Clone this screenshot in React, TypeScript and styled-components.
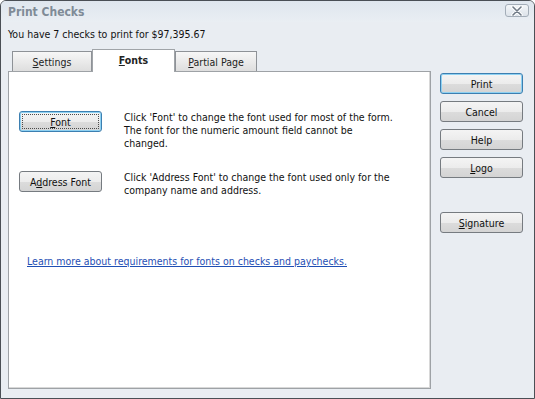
import React from "react";
import styled, { createGlobalStyle, css } from "styled-components";

const Global = createGlobalStyle`
  html, body { margin: 0; padding: 0; background: #ffffff; }
  body { font-family: "DejaVu Sans Condensed", "DejaVu Sans", sans-serif; }
  * { box-sizing: border-box; }
`;

const Window = styled.div`
  width: 535px;
  height: 399px;
  border: 1px solid #4a4f55;
  border-radius: 6px 6px 0 0;
  background: #e9edf2;
  display: flex;
  flex-direction: column;
  overflow: hidden;
  font-family: "DejaVu Sans Condensed", "DejaVu Sans", sans-serif;
  font-size: 10.5px;
  color: #111;
`;

const TitleBar = styled.div`
  height: 21px;
  display: flex;
  align-items: center;
  justify-content: space-between;
  padding: 0 5px 0 7px;
  background: linear-gradient(#dfe6ee, #e9eef3);
`;

const Title = styled.span`
  font-family: "DejaVu Sans Condensed", "DejaVu Sans", sans-serif;
  font-weight: bold;
  font-size: 12px;
  color: #7f8b97;
`;

const CloseBtn = styled.div`
  width: 24px;
  height: 13px;
  border: 1px solid #a3adb8;
  border-radius: 3px;
  background: linear-gradient(#f3f6f9, #dde3ea);
  display: flex;
  align-items: center;
  justify-content: center;
  margin-top: -2px;
`;

const Summary = styled.div`
  margin-top: 5px;
  padding-left: 7px;
  line-height: 14px;
`;

const Main = styled.div`
  display: flex;
  padding-left: 7px;
  margin-top: 8px;
`;

const LeftCol = styled.div`
  width: 423px;
  display: flex;
  flex-direction: column;
`;

const TabStrip = styled.div`
  height: 22px;
  display: flex;
  align-items: flex-end;
  padding-left: 4px;
  position: relative;
  z-index: 1;
`;

const Tab = styled.div<{ $active?: boolean; $w: number }>`
  width: ${(p) => p.$w}px;
  height: 20px;
  display: flex;
  align-items: center;
  justify-content: center;
  border: 1px solid #8e9297;
  border-bottom: none;
  background: linear-gradient(#f7f7f7, #dedede);
  color: #222;
  ${(p) =>
    p.$active &&
    css`
      height: 23px;
      margin-bottom: -1px;
      background: #ffffff;
      font-weight: bold;
      border-color: #a0a4a8;
      padding-bottom: 2px;
    `}
`;

const Panel = styled.div`
  height: 318px;
  background: #ffffff;
  border: 1px solid #9ea2a6;
  box-shadow: inset -1px -1px 0 #d8d8d8;
  padding: 0 10px;
  display: flex;
  flex-direction: column;
`;

const Row = styled.div<{ $mt: number }>`
  display: flex;
  align-items: flex-start;
  gap: 22px;
  margin-top: ${(p) => p.$mt}px;
`;

const Desc = styled.p`
  margin: 0;
  line-height: 13px;
  white-space: nowrap;
`;

const Button = styled.div<{ $focus?: boolean; $default?: boolean }>`
  width: 83px;
  height: 21px;
  flex: none;
  display: flex;
  align-items: center;
  justify-content: center;
  border: 1px solid #767b80;
  border-radius: 3px;
  background: linear-gradient(#f4f4f4 0%, #ececec 50%, #dcdcdc 51%, #d4d4d4 100%);
  color: #111;
  position: relative;
  ${(p) =>
    (p.$focus || p.$default) &&
    css`
      border-color: #3c7fb1;
      box-shadow: inset 0 0 0 1px #8ed1f2;
    `}
  ${(p) =>
    p.$focus &&
    css`
      &::after {
        content: "";
        position: absolute;
        inset: 2px;
        border: 1px dotted #4b4b4b;
        border-radius: 1px;
      }
    `}
`;

const Link = styled.a`
  margin-top: 58px;
  margin-left: 8px;
  line-height: 13px;
  color: #1f4fb4;
  text-decoration: underline;
  cursor: pointer;
`;

const RightCol = styled.div`
  margin-left: 9px;
  padding-top: 24px;
  display: flex;
  flex-direction: column;
  gap: 7px;
`;

const Spacer = styled.div`
  height: 20px;
`;

export default function App() {
  return (
    <>
      <Global />
      <Window>
        <TitleBar>
          <Title>Print Checks</Title>
          <CloseBtn>
            <svg width="12" height="10" viewBox="0 0 12 10">
              <path d="M2 1 L10 9 M10 1 L2 9" stroke="#ffffff" strokeWidth="3.4" strokeLinecap="round" />
              <path d="M2 1 L10 9 M10 1 L2 9" stroke="#6f7a86" strokeWidth="1.6" strokeLinecap="round" />
            </svg>
          </CloseBtn>
        </TitleBar>
        <Summary>You have 7 checks to print for $97,395.67</Summary>
        <Main>
          <LeftCol>
            <TabStrip>
              <Tab $w={80}>
                <span>
                  <u>S</u>ettings
                </span>
              </Tab>
              <Tab $w={83} $active>
                <span>
                  <u>F</u>onts
                </span>
              </Tab>
              <Tab $w={82}>
                <span>
                  <u>P</u>artial Page
                </span>
              </Tab>
            </TabStrip>
            <Panel>
              <Row $mt={39}>
                <Button $focus>
                  <span>
                    <u>F</u>ont
                  </span>
                </Button>
                <Desc>
                  Click 'Font' to change the font used for most of the form.
                  <br />
                  The font for the numeric amount field cannot be
                  <br />
                  changed.
                </Desc>
              </Row>
              <Row $mt={21}>
                <Button>
                  <span>
                    A<u>d</u>dress Font
                  </span>
                </Button>
                <Desc>
                  Click 'Address Font' to change the font used only for the
                  <br />
                  company name and address.
                </Desc>
              </Row>
              <Link>Learn more about requirements for fonts on checks and paychecks.</Link>
            </Panel>
          </LeftCol>
          <RightCol>
            <Button $default>Print</Button>
            <Button>Cancel</Button>
            <Button>Help</Button>
            <Button>
              <span>
                <u>L</u>ogo
              </span>
            </Button>
            <Spacer />
            <Button>
              <span>
                <u>S</u>ignature
              </span>
            </Button>
          </RightCol>
        </Main>
      </Window>
    </>
  );
}
